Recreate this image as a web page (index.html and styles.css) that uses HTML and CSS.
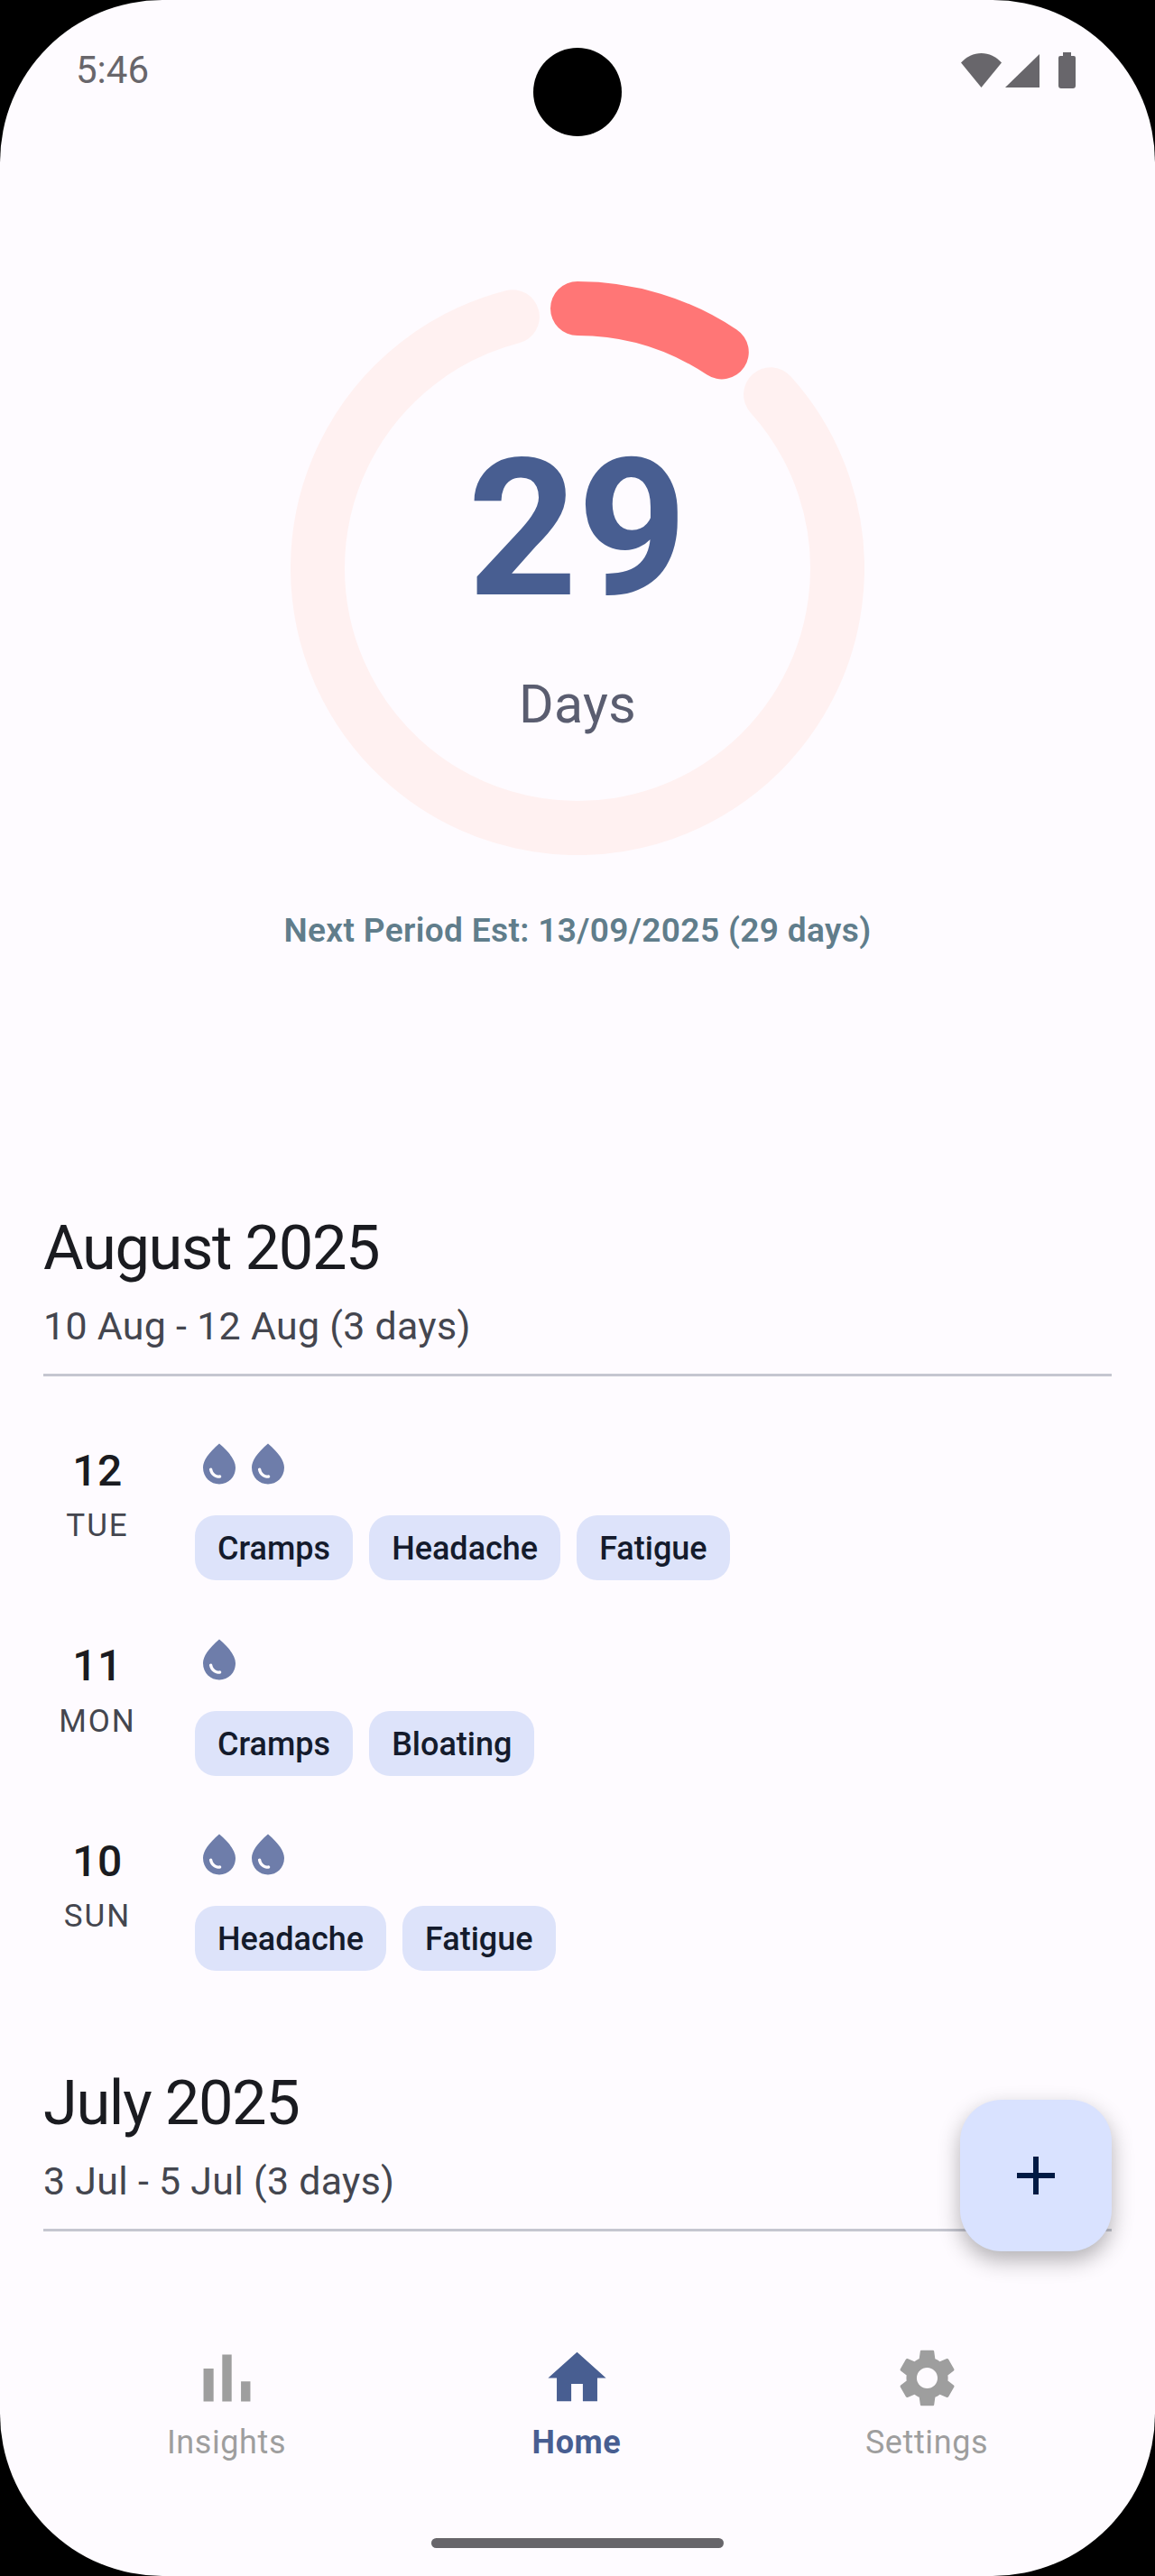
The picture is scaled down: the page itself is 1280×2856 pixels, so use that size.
FILE: index.html
```html
<!DOCTYPE html>
<html lang="en">
<head>
    <meta charset="UTF-8">
    <title>Period tracker</title>
    <link rel="stylesheet" href="styles.css">
</head>
<body>
    <svg class="icon-defs" aria-hidden="true">
        <symbol id="drop" viewBox="0 0 24 24">
            <path d="M12 2c-5.33 4.55-8 8.48-8 11.8 0 4.98 3.8 8.2 8 8.2s8-3.22 8-8.2c0-3.32-2.67-7.25-8-11.8zM7.83 14c.37 0 .67.26.74.62.41 2.22 2.28 2.98 3.64 2.87.43-.02.79.32.79.75 0 .4-.32.73-.72.75-2.13.13-4.62-1.09-5.19-4.12-.08-.45.28-.87.74-.87z"/>
        </symbol>
    </svg>

    <div class="screen">
        <div class="status-bar">
            <span class="status-time">5:46</span>
            <svg class="status-icons" width="131" height="40" viewBox="0 0 131 40">
                <path d="M22.5 39 0 11.5C6 5 14 1 22.5 1S39 5 45 11.5z"/>
                <path d="M49 39 87 2v37z"/>
                <path d="M108 6a2 2 0 0 1 2-2h3V0h9v4h3a2 2 0 0 1 2 2v31a3 3 0 0 1-3 3h-13a3 3 0 0 1-3-3z"/>
            </svg>
        </div>
        <div class="camera"></div>

        <div class="content">
            <div class="ring">
                <svg class="ring-art" width="636" height="636" viewBox="0 0 636 636">
                    <path class="ring-track" d="M532 125.3A288 288 0 1 1 245.9 39.2"/>
                    <path class="ring-progress" d="M318 30A288 288 0 0 1 477.8 78.4"/>
                </svg>
                <div class="ring-text">
                    <div class="ring-count">29</div>
                    <div class="ring-label">Days</div>
                </div>
            </div>
            <p class="next-period">Next Period Est: 13/09/2025 (29 days)</p>

            <section class="month">
                <h2 class="month-title">August 2025</h2>
                <p class="month-range">10 Aug - 12 Aug (3 days)</p>
                <div class="month-rule"></div>
                <div class="day-list">
                    <div class="day-row">
                        <div class="day-date">
                            <div class="day-num">12</div>
                            <div class="day-name">TUE</div>
                        </div>
                        <div class="day-body">
                            <div class="drops">
                                <svg class="drop"><use href="#drop"/></svg>
                                <svg class="drop"><use href="#drop"/></svg>
                            </div>
                            <div class="chips">
                                <span class="chip">Cramps</span>
                                <span class="chip">Headache</span>
                                <span class="chip">Fatigue</span>
                            </div>
                        </div>
                    </div>
                    <div class="day-row">
                        <div class="day-date">
                            <div class="day-num">11</div>
                            <div class="day-name">MON</div>
                        </div>
                        <div class="day-body">
                            <div class="drops">
                                <svg class="drop"><use href="#drop"/></svg>
                            </div>
                            <div class="chips">
                                <span class="chip">Cramps</span>
                                <span class="chip">Bloating</span>
                            </div>
                        </div>
                    </div>
                    <div class="day-row">
                        <div class="day-date">
                            <div class="day-num">10</div>
                            <div class="day-name">SUN</div>
                        </div>
                        <div class="day-body">
                            <div class="drops">
                                <svg class="drop"><use href="#drop"/></svg>
                                <svg class="drop"><use href="#drop"/></svg>
                            </div>
                            <div class="chips">
                                <span class="chip">Headache</span>
                                <span class="chip">Fatigue</span>
                            </div>
                        </div>
                    </div>
                </div>
            </section>

            <section class="month">
                <h2 class="month-title">July 2025</h2>
                <p class="month-range">3 Jul - 5 Jul (3 days)</p>
                <div class="month-rule"></div>
            </section>
        </div>

        <button class="fab" aria-label="Add">
            <svg width="42" height="42" viewBox="0 0 42 42"><path d="M18 0h6v18h18v6H24v18h-6V24H0v-6h18z"/></svg>
        </button>

        <nav class="bottom-nav">
            <div class="nav-item">
                <div class="nav-icon">
                    <svg width="89" height="89" viewBox="0 0 24 24"><path d="M5 9.2h3V19H5zM10.6 5h2.8v14h-2.8zm5.6 8H19v6h-2.8z"/></svg>
                </div>
                <span class="nav-label">Insights</span>
            </div>
            <div class="nav-item nav-item-active">
                <div class="nav-icon">
                    <svg width="77" height="77" viewBox="0 0 24 24"><path d="M10 20v-6h4v6h5v-8h3L12 3 2 12h3v8z"/></svg>
                </div>
                <span class="nav-label">Home</span>
            </div>
            <div class="nav-item">
                <div class="nav-icon">
                    <svg width="77" height="77" viewBox="0 0 24 24"><path d="M19.14 12.94c.04-.3.06-.61.06-.94 0-.32-.02-.64-.07-.94l2.03-1.58c.18-.14.23-.41.12-.61l-1.92-3.32c-.12-.22-.37-.29-.59-.22l-2.39.96c-.5-.38-1.03-.7-1.62-.94l-.36-2.54c-.04-.24-.24-.41-.48-.41h-3.84c-.24 0-.43.17-.47.41l-.36 2.54c-.59.24-1.13.57-1.62.94l-2.39-.96c-.22-.08-.47 0-.59.22L2.74 8.87c-.12.21-.08.47.12.61l2.03 1.58c-.05.3-.07.62-.07.94s.02.64.07.94l-2.03 1.58c-.18.14-.23.41-.12.61l1.92 3.32c.12.22.37.29.59.22l2.39-.96c.5.38 1.03.7 1.62.94l.36 2.54c.05.24.24.41.48.41h3.84c.24 0 .44-.17.47-.41l.36-2.54c.59-.24 1.13-.56 1.62-.94l2.39.96c.22.08.47 0 .59-.22l1.92-3.32c.12-.22.07-.47-.12-.61l-2.01-1.58zM12 15.6c-1.98 0-3.6-1.62-3.6-3.6s1.62-3.6 3.6-3.6 3.6 1.62 3.6 3.6-1.62 3.6-3.6 3.6z"/></svg>
                </div>
                <span class="nav-label">Settings</span>
            </div>
        </nav>
        <div class="home-bar"></div>
    </div>
</body>
</html>
```

FILE: styles.css
```css
* {
    box-sizing: border-box;
}

html, body {
    margin: 0;
    background-color: #000;
}

body {
    font-family: Roboto, 'Noto Sans', sans-serif;
}

.icon-defs {
    display: none;
}

.screen {
    position: relative;
    display: flex;
    flex-direction: column;
    width: 1280px;
    height: 2856px;
    overflow: hidden;
    background-color: #fefbff;
    border-radius: 180px;
}

/* status bar */
.status-bar {
    display: flex;
    flex: none;
    justify-content: space-between;
    align-items: flex-start;
    height: 130px;
    padding: 51px 84px 0 84px;
}

.status-time {
    font-size: 42px;
    line-height: 54px;
    color: #68666b;
}

.status-icons {
    margin-top: 7px;
    fill: #68666b;
}

.camera {
    position: absolute;
    top: 53px;
    left: 591px;
    width: 98px;
    height: 98px;
    background-color: #000;
    border-radius: 50%;
}

.content {
    flex: 1;
    min-height: 0;
    overflow: hidden;
}

/* cycle ring */
.ring {
    display: grid;
    justify-items: center;
    width: 636px;
    height: 636px;
    margin: 182px auto 0;
}

.ring-art, .ring-text {
    grid-area: 1 / 1;
}

.ring-track, .ring-progress {
    fill: none;
    stroke-width: 60;
    stroke-linecap: round;
}

.ring-track {
    stroke: #fff1f1;
}

.ring-progress {
    stroke: #ff7676;
}

.ring-text {
    padding-top: 155px;
    text-align: center;
}

.ring-count {
    font-size: 212px;
    line-height: 240px;
    font-weight: 700;
    color: #485e91;
}

.ring-label {
    margin-top: 34px;
    font-size: 59px;
    line-height: 80px;
    letter-spacing: 0.3px;
    color: #5a5d70;
}

.next-period {
    margin: 59px 0 0;
    font-size: 37.1px;
    line-height: 50px;
    font-weight: 600;
    letter-spacing: 0.35px;
    text-align: center;
    color: #607d8b;
}

/* month sections */
.month {
    padding: 0 48px;
    margin-bottom: 101px;
}

.next-period + .month {
    margin-top: 281px;
}

.month-title {
    margin: 0;
    font-size: 68.6px;
    line-height: 91px;
    font-weight: 400;
    letter-spacing: -1.4px;
    color: #1a1b20;
}

.month-range {
    margin: 13px 0 0;
    font-size: 42.9px;
    line-height: 57px;
    letter-spacing: 0.3px;
    color: #44464f;
}

.month-rule {
    height: 3px;
    margin-top: 24px;
    background-color: #c5c6d0;
}

.day-list {
    display: flex;
    flex-direction: column;
    gap: 60.5px;
    margin-top: 70px;
}

.day-row {
    display: flex;
    gap: 48px;
    height: 156px;
}

.day-date {
    flex: none;
    width: 120px;
    padding-top: 2.6px;
    text-align: center;
}

.day-num {
    font-size: 48px;
    line-height: 64px;
    font-weight: 500;
    letter-spacing: 0.4px;
    color: #1a1b20;
}

.day-name {
    margin-top: 6.8px;
    font-size: 35px;
    line-height: 46px;
    letter-spacing: 2px;
    color: #44464f;
}

.drops {
    display: flex;
    height: 54px;
}

.drop {
    width: 54px;
    height: 54px;
    fill: #6e7daa;
}

.chips {
    display: flex;
    gap: 18px;
    margin-top: 30px;
}

.chip {
    height: 72px;
    padding: 0 25px;
    font-size: 36px;
    line-height: 74px;
    font-weight: 500;
    color: #141b2c;
    background-color: #dde3fa;
    border-radius: 23px;
}

.fab {
    position: absolute;
    top: 2328px;
    left: 1064px;
    display: flex;
    align-items: center;
    justify-content: center;
    width: 168px;
    height: 168px;
    padding: 0;
    border: none;
    background-color: #d9e2ff;
    border-radius: 46px;
    box-shadow: 0 10px 24px rgba(0, 0, 0, 0.3);
    fill: #001a43;
}

/* bottom navigation */
.bottom-nav {
    display: grid;
    flex: none;
    grid-template-columns: repeat(3, 1fr);
    height: 254px;
    padding: 31.5px 59px 0 57px;
}

.nav-item {
    display: flex;
    flex-direction: column;
    align-items: center;
    fill: #9e9e9e;
    color: #9e9e9e;
}

.nav-item-active {
    fill: #485e91;
    color: #485e91;
}

.nav-item-active .nav-label {
    font-weight: 700;
}

.nav-icon {
    display: flex;
    align-items: center;
    height: 89px;
}

.nav-label {
    margin-top: 4px;
    font-size: 36px;
    line-height: 46px;
    letter-spacing: 0.6px;
}

.home-bar {
    flex: none;
    width: 324px;
    height: 11px;
    margin: 0 auto 31px;
    background-color: #67656a;
    border-radius: 6px;
}
```
